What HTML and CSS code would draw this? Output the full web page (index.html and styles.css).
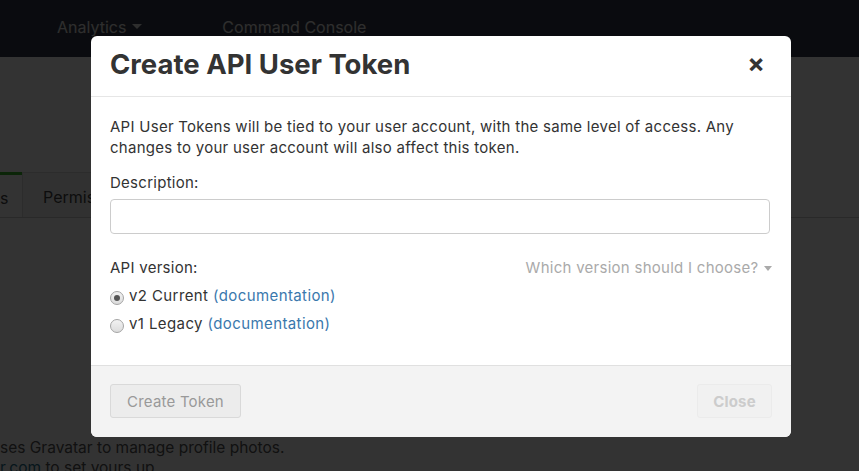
FILE: index.html
```html
<!DOCTYPE html>
<html>
<head>
<meta charset="utf-8">
<link rel="stylesheet" href="styles.css">
</head>
<body>
<div class="page">
  <header class="navbar">
    <span class="nav-item">Analytics <span class="caret"></span></span>
    <span class="nav-item">Command Console</span>
  </header>
  <main class="content">
    <nav class="tabs">
      <span class="tab active">s</span>
      <span class="tab">Permissions</span>
    </nav>
    <div class="spacer"></div>
    <p class="note">ses Gravatar to manage profile photos.<br><a class="plink">r.com</a> to set yours up.</p>
  </main>
</div>
<div class="overlay"></div>
<div class="modal">
  <div class="modal-header">
    <h2 class="modal-title">Create API User Token</h2>
    <span class="close-x">&times;</span>
  </div>
  <div class="modal-body">
    <p class="intro">API User Tokens will be tied to your user account, with the same level of access. Any changes to your user account will also affect this token.</p>
    <label class="label">Description:</label>
    <input class="input" type="text">
    <div class="version-row">
      <span class="label">API version:</span>
      <span class="help">Which version should I choose? <span class="caret small"></span></span>
    </div>
    <label class="radio"><input type="radio" name="v" checked> <span>v2 Current <a class="link">(documentation)</a></span></label>
    <label class="radio"><input type="radio" name="v"> <span>v1 Legacy <a class="link">(documentation)</a></span></label>
  </div>
  <div class="modal-footer">
    <button class="btn btn-create">Create Token</button>
    <button class="btn btn-close">Close</button>
  </div>
</div>
</body>
</html>
```
FILE: styles.css
```css
* { box-sizing: border-box; }
html, body { margin: 0; padding: 0; }
body {
  width: 859px;
  height: 471px;
  overflow: hidden;
  background: #fff;
  font-family: Inter, "Noto Sans", sans-serif;
  color: #333;
  position: relative;
}
.page { height: 471px; overflow: hidden; }
.navbar {
  height: 57px;
  background: #363b4a;
  display: flex;
  align-items: center;
  gap: 80px;
  padding: 0 0 4px 57px;
}
.nav-item {
  color: #e6e6e6;
  font-size: 16px;
  display: flex;
  align-items: center;
  gap: 6px;
}
.caret {
  display: inline-block;
  width: 0; height: 0;
  border-left: 5px solid transparent;
  border-right: 5px solid transparent;
  border-top: 5px solid currentColor;
}
.caret.small {
  border-left-width: 4px;
  border-right-width: 4px;
  border-top-width: 5px;
  vertical-align: middle;
  margin-left: 1px;
}
.content { padding-top: 115px; }
.tabs {
  display: flex;
  height: 46px;
  border-bottom: 1px solid #ccc;
}
.tab {
  font-size: 16px;
  color: #444;
  padding: 14px 20px 0;
  border: 1px solid #ddd;
  border-bottom: none;
  background: #f4f4f4;
}
.tab.active {
  padding: 13px 8px 0 0;
  border: none;
  border-top: 3px solid #3bb82a;
  background: #fff;
  width: 22px;
  overflow: hidden;
}
.spacer { height: 220px; }
.note {
  margin: 0;
  font-size: 15.5px;
  line-height: 20px;
  color: #555;
}
.plink { color: #1f6f8b; }
.overlay {
  position: absolute;
  inset: 0;
  background: rgba(0,0,0,0.8);
}
.modal {
  position: absolute;
  left: 91px;
  top: 36px;
  width: 700px;
  height: 401px;
  background: #fff;
  border-radius: 6px;
  overflow: hidden;
  display: flex;
  flex-direction: column;
}
.modal-header {
  height: 61px;
  border-bottom: 1px solid #e6e6e6;
  display: flex;
  align-items: center;
  justify-content: space-between;
  padding: 0 26px 0 19px;
}
.modal-title {
  margin: 0;
  font-size: 27.5px;
  font-weight: 700;
  color: #333;
  letter-spacing: 0;
  padding-bottom: 4px;
}
.close-x {
  font-size: 26px;
  font-weight: 700;
  color: #333;
  line-height: 1;
  padding-bottom: 4px;
}
.modal-body {
  flex: 1;
  padding: 19px 19px 0 19px;
  font-size: 15px;
  line-height: 21px;
  letter-spacing: 0.27px;
}
.intro { margin: 0 0 14px; }
.label { display: block; }
.input {
  display: block;
  width: 660px;
  height: 35px;
  margin-top: 6px;
  border: 1px solid #ccc;
  border-radius: 4px;
  background: #fff;
}
.version-row {
  display: flex;
  justify-content: space-between;
  margin-top: 23px;
  width: 662px;
}
.help { color: #aaa; }
.radio {
  display: flex;
  align-items: center;
  gap: 1px;
  margin-top: 7px;
  height: 21px;
  letter-spacing: 0.4px;
}
.radio + .radio { margin-top: 7px; }
.radio input {
  appearance: none;
  -webkit-appearance: none;
  width: 14px;
  height: 14px;
  margin: 4px 4px 0 0;
  border-radius: 50%;
  border: 1px solid #a4a4a4;
  background: linear-gradient(#f2f2f2, #dcdcdc);
  position: relative;
}
.radio input:checked::after {
  content: "";
  position: absolute;
  left: 3px; top: 3px;
  width: 6px; height: 6px;
  border-radius: 50%;
  background: #555;
}
.link { color: #3a78ad; }
.modal-footer {
  height: 72px;
  background: #f3f3f3;
  border-top: 1px solid #e0e0e0;
  display: flex;
  justify-content: space-between;
  align-items: flex-start;
  padding: 18px 19px 0 19px;
}
.btn {
  height: 34px;
  font-family: inherit;
  font-size: 15px;
  border-radius: 3px;
  letter-spacing: 0.2px;
}
.btn-create {
  width: 131px;
  background: #ececec;
  border: 1px solid #d9d9d9;
  color: #999;
}
.btn-close {
  width: 75px;
  background: #f1f1f1;
  border: 1px solid #ebebeb;
  color: #ccc;
  font-weight: 700;
}
```
